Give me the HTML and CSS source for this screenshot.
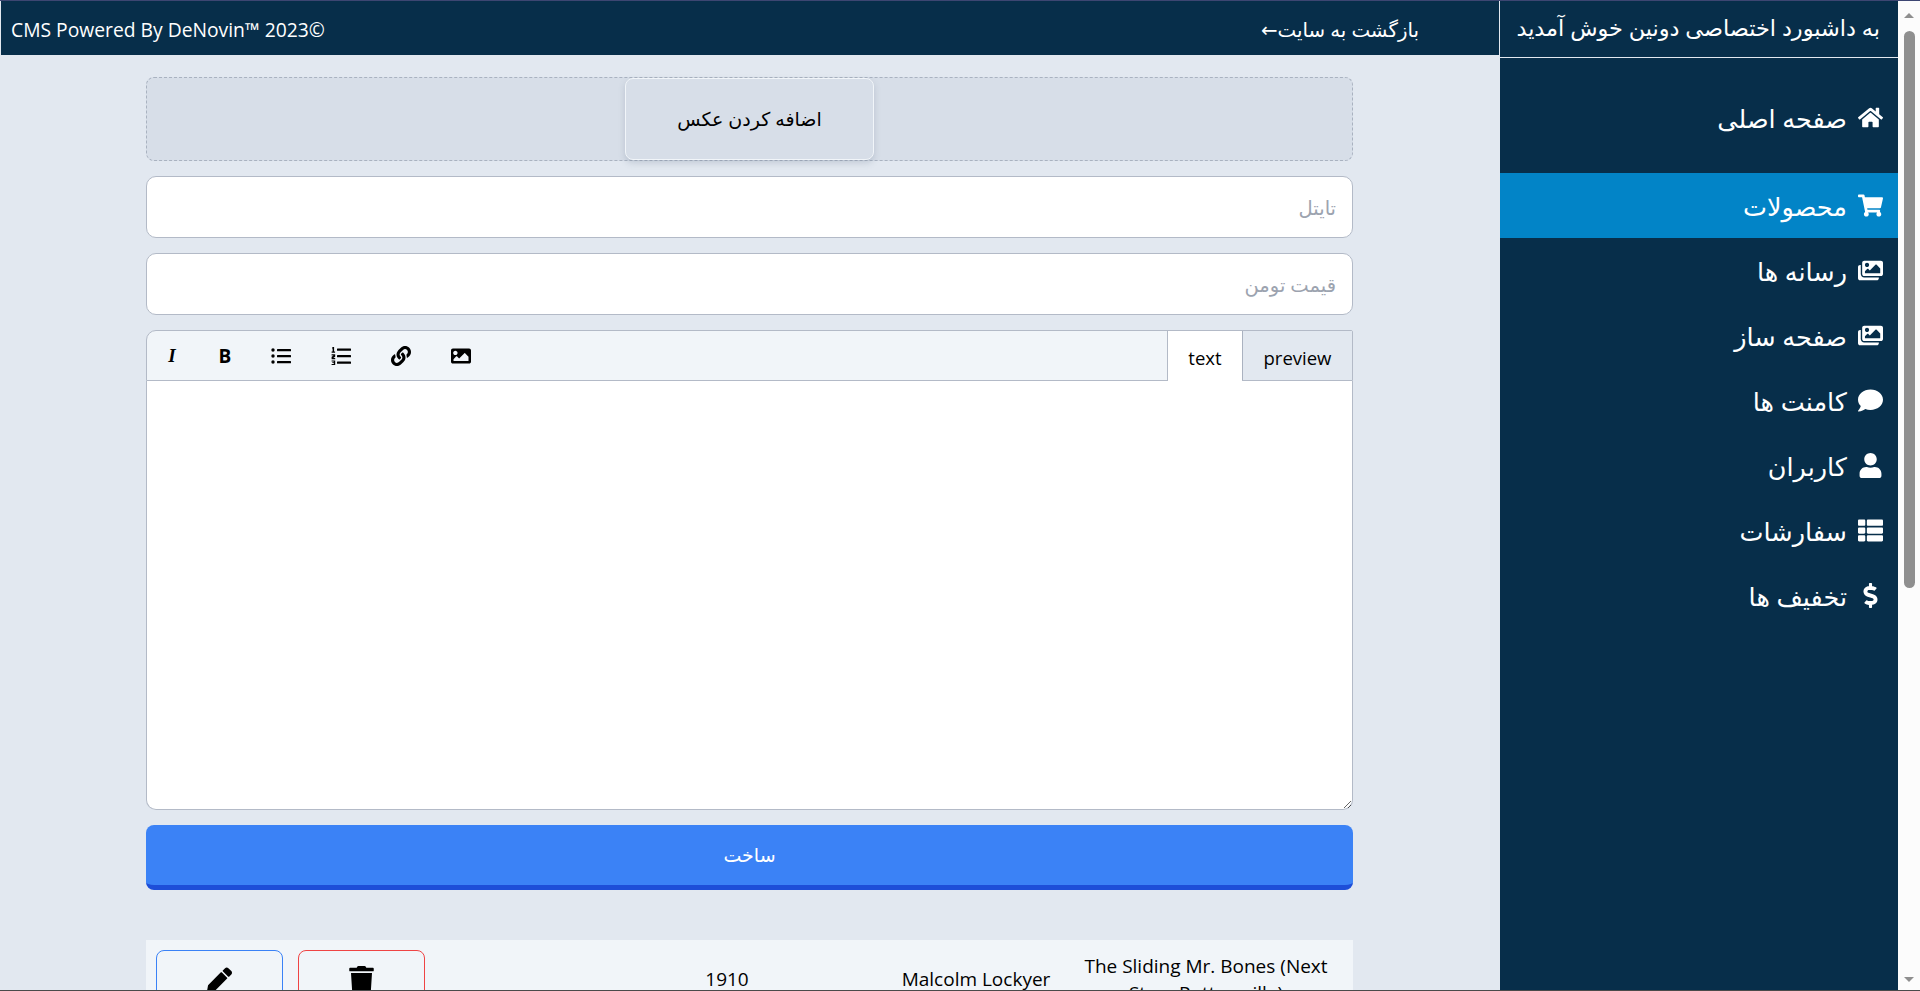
FILE: index.html
```html
<!DOCTYPE html>
<html lang="fa">
<head>
<meta charset="utf-8">
<title>CMS</title>
<link rel="stylesheet" href="styles.css">
</head>
<body>
<div class="edge-top"></div>
<div class="app">
  <main class="main">
    <header class="topbar">
      <span class="copyright">CMS Powered By DeNovin™ 2023©</span>
      <a class="back" dir="rtl">بازگشت به سایت←</a>
    </header>
    <div class="content">
      <div class="dropzone"><button class="add-photo" dir="rtl">اضافه کردن عکس</button></div>
      <input class="field" dir="rtl" type="text" placeholder="تایتل">
      <input class="field" dir="rtl" type="text" placeholder="قیمت تومن">
      <div class="editor">
        <div class="editor-bar">
          <div class="tools">
            <span class="tool tool-i">I</span>
            <span class="tool tool-b">B</span>
            <span class="tool tool-ul"><svg class="ticon" viewBox="0 0 20 20"><circle cx="2" cy="4" r="1.7"/><circle cx="2" cy="10" r="1.7"/><circle cx="2" cy="16" r="1.7"/><rect x="6" y="3" width="14" height="2.2" rx=".5"/><rect x="6" y="9" width="14" height="2.2" rx=".5"/><rect x="6" y="15" width="14" height="2.2" rx=".5"/></svg></span>
            <span class="tool tool-ol"><svg class="ticon" viewBox="0 0 20 20"><rect x="6" y="2.5" width="14" height="2.2" rx=".5"/><rect x="6" y="9" width="14" height="2.2" rx=".5"/><rect x="6" y="15.5" width="14" height="2.2" rx=".5"/><path d="M1.5 1h1.6v4.6h1v1.2H.6V5.6h1V2.6h-.6zM.6 8.2h3.6v2.6L2.2 12h2v1.2H.6v-2.4l2-1.4H.6zM.6 14.4h3.6V19H.6v-1.1h2.2v-.8H1.3v-.9h1.5v-.7H.6z"/></svg></span>
            <span class="tool tool-link"><svg class="ticon" viewBox="0 0 512 512"><path d="M326.612 185.391c59.747 59.809 58.927 155.698.36 214.59-.11.12-.24.25-.36.37l-67.2 67.2c-59.27 59.27-155.699 59.262-214.96 0-59.27-59.26-59.27-155.7 0-214.96l37.106-37.106c9.84-9.84 26.786-3.3 27.294 10.606.648 17.722 3.826 35.527 9.69 52.721 1.986 5.822.567 12.262-3.783 16.612l-13.087 13.087c-28.026 28.026-28.905 73.66-1.155 101.96 28.024 28.579 74.086 28.749 102.325.51l67.2-67.19c28.191-28.191 28.073-73.757 0-101.83-3.701-3.694-7.429-6.564-10.341-8.569a16.037 16.037 0 0 1-6.947-12.606c-.396-10.567 3.348-21.456 11.698-29.806l21.054-21.055c5.521-5.521 14.182-6.199 20.584-1.731a152.482 152.482 0 0 1 20.522 17.197zM467.547 44.449c-59.261-59.262-155.69-59.27-214.96 0l-67.2 67.2c-.12.12-.25.25-.36.37-58.566 58.892-59.387 154.781.36 214.59a152.454 152.454 0 0 0 20.521 17.196c6.402 4.468 15.064 3.789 20.584-1.731l21.054-21.055c8.35-8.35 12.094-19.239 11.698-29.806a16.037 16.037 0 0 0-6.947-12.606c-2.912-2.005-6.64-4.875-10.341-8.569-28.073-28.073-28.191-73.639 0-101.83l67.2-67.19c28.239-28.239 74.3-28.069 102.325.51 27.75 28.3 26.872 73.934-1.155 101.96l-13.087 13.087c-4.35 4.35-5.769 10.79-3.783 16.612 5.864 17.194 9.042 34.999 9.69 52.721.509 13.906 17.454 20.446 27.294 10.606l37.106-37.106c59.271-59.259 59.271-155.699.001-214.959z"/></svg></span>
            <span class="tool tool-img"><svg class="ticon" viewBox="0 0 512 512"><path d="M464 448H48c-26.51 0-48-21.49-48-48V112c0-26.51 21.49-48 48-48h416c26.51 0 48 21.49 48 48v288c0 26.51-21.49 48-48 48zM112 120c-30.928 0-56 25.072-56 56s25.072 56 56 56 56-25.072 56-56-25.072-56-56-56zM64 384h384V272l-87.515-87.515c-4.686-4.686-12.284-4.686-16.971 0L208 320l-55.515-55.515c-4.686-4.686-12.284-4.686-16.971 0L64 336v48z"/></svg></span>
          </div>
          <div class="tabs">
            <span class="tab tab-on">text</span>
            <span class="tab tab-off">preview</span>
          </div>
        </div>
        <textarea class="editor-text"></textarea>
      </div>
      <button class="submit" dir="rtl">ساخت</button>
      <div class="row">
        <div class="actions">
          <button class="act act-edit"><svg class="act-icon" viewBox="0 0 512 512"><path d="M497.9 142.1l-46.1 46.1c-4.7 4.7-12.3 4.7-17 0l-111-111c-4.7-4.7-4.7-12.3 0-17l46.1-46.1c18.7-18.7 49.1-18.7 67.9 0l60.1 60.1c18.8 18.7 18.8 49.1 0 67.9zM284.2 99.8L21.6 362.4.4 483.9c-2.9 16.4 11.4 30.6 27.8 27.8l121.5-21.3 262.6-262.6c4.7-4.7 4.7-12.3 0-17l-111-111c-4.8-4.7-12.4-4.7-17.1 0z"/></svg></button>
          <button class="act act-del"><svg class="act-icon" viewBox="0 0 448 512"><path d="M432 32H312l-9.4-18.7A24 24 0 0 0 281.1 0H166.8a23.72 23.72 0 0 0-21.4 13.3L136 32H16A16 16 0 0 0 0 48v32a16 16 0 0 0 16 16h416a16 16 0 0 0 16-16V48a16 16 0 0 0-16-16zM53.2 467a48 48 0 0 0 47.9 45h245.8a48 48 0 0 0 47.9-45L416 128H32z"/></svg></button>
        </div>
        <span></span>
        <span class="cell">1910</span>
        <span class="cell">Malcolm Lockyer</span>
        <span class="cell">The Sliding Mr. Bones (Next Stop, Pottersville)</span>
      </div>
    </div>
  </main>
  <aside class="sidebar" dir="rtl">
    <div class="side-head">به داشبورد اختصاصی دونین خوش آمدید</div>
    <nav class="nav">
      <a class="nav-item nav-home"><svg class="nav-icon" viewBox="0 0 576 512"><path d="M280.37 148.26L96 300.11V464a16 16 0 0 0 16 16l112.06-.29a16 16 0 0 0 15.92-16V368a16 16 0 0 1 16-16h64a16 16 0 0 1 16 16v95.64a16 16 0 0 0 16 16.05L464 480a16 16 0 0 0 16-16V300L295.67 148.26a12.19 12.19 0 0 0-15.3 0zM571.6 251.47L488 182.56V44.05a12 12 0 0 0-12-12h-56a12 12 0 0 0-12 12v72.61L318.47 43a48 48 0 0 0-61 0L4.34 251.47a12 12 0 0 0-1.6 16.9l25.5 31A12 12 0 0 0 45.15 301l235.22-193.74a12.19 12.19 0 0 1 15.3 0L530.9 301a12 12 0 0 0 16.9-1.6l25.5-31a12 12 0 0 0-1.7-16.93z"/></svg><span>صفحه اصلی</span></a>
      <a class="nav-item nav-active"><svg class="nav-icon" viewBox="0 0 576 512"><path d="M528.12 301.319l47.273-208C578.806 78.301 567.391 64 551.99 64H159.208l-9.166-44.81C147.758 8.021 137.93 0 126.529 0H24C10.745 0 0 10.745 0 24v16c0 13.255 10.745 24 24 24h69.883l70.248 343.435C147.325 417.1 136 435.222 136 456c0 30.928 25.072 56 56 56s56-25.072 56-56c0-15.674-6.447-29.835-16.824-40h209.647C430.447 426.165 424 440.326 424 456c0 30.928 25.072 56 56 56s56-25.072 56-56c0-22.172-12.888-41.332-31.579-50.405l5.517-24.276c3.413-15.018-8.002-29.319-23.403-29.319H218.117l-6.545-32h293.145c11.206 0 20.92-7.754 23.403-18.681z"/></svg><span>محصولات</span></a>
      <a class="nav-item"><svg class="nav-icon" viewBox="0 0 576 512"><path d="M480 416v16c0 26.51-21.49 48-48 48H48c-26.51 0-48-21.49-48-48V176c0-26.51 21.49-48 48-48h16v208c0 44.112 35.888 80 80 80h336zm96-80V80c0-26.51-21.49-48-48-48H144c-26.51 0-48 21.49-48 48v256c0 26.51 21.49 48 48 48h384c26.51 0 48-21.49 48-48zM256 128c0 26.51-21.49 48-48 48s-48-21.49-48-48 21.49-48 48-48 48 21.49 48 48zm-96 144l55.515-55.515c4.686-4.686 12.284-4.686 16.971 0L272 256l135.515-135.515c4.686-4.686 12.284-4.686 16.971 0L512 208v112H160v-48z"/></svg><span>رسانه ها</span></a>
      <a class="nav-item"><svg class="nav-icon" viewBox="0 0 576 512"><path d="M480 416v16c0 26.51-21.49 48-48 48H48c-26.51 0-48-21.49-48-48V176c0-26.51 21.49-48 48-48h16v208c0 44.112 35.888 80 80 80h336zm96-80V80c0-26.51-21.49-48-48-48H144c-26.51 0-48 21.49-48 48v256c0 26.51 21.49 48 48 48h384c26.51 0 48-21.49 48-48zM256 128c0 26.51-21.49 48-48 48s-48-21.49-48-48 21.49-48 48-48 48 21.49 48 48zm-96 144l55.515-55.515c4.686-4.686 12.284-4.686 16.971 0L272 256l135.515-135.515c4.686-4.686 12.284-4.686 16.971 0L512 208v112H160v-48z"/></svg><span>صفحه ساز</span></a>
      <a class="nav-item"><svg class="nav-icon" viewBox="0 0 512 512"><path d="M256 32C114.6 32 0 125.1 0 240c0 49.6 21.4 95 57 130.7C44.5 421.1 2.7 466 2.2 466.5c-2.2 2.3-2.8 5.7-1.5 8.7S4.8 480 8 480c66.3 0 116-31.8 140.6-51.4 32.7 12.3 69 19.4 107.4 19.4 141.4 0 256-93.1 256-208S397.4 32 256 32z"/></svg><span>کامنت ها</span></a>
      <a class="nav-item"><svg class="nav-icon" viewBox="0 0 448 512"><path d="M224 256c70.7 0 128-57.3 128-128S294.7 0 224 0 96 57.3 96 128s57.3 128 128 128zm89.6 32h-16.7c-22.2 10.2-46.9 16-72.9 16s-50.6-5.8-72.9-16h-16.7C60.2 288 0 348.2 0 422.4V464c0 26.5 21.5 48 48 48h352c26.5 0 48-21.5 48-48v-41.6c0-74.2-60.2-134.4-134.4-134.4z"/></svg><span>کاربران</span></a>
      <a class="nav-item"><svg class="nav-icon" viewBox="0 0 512 512"><path d="M149.333 216v80c0 13.255-10.745 24-24 24H24c-13.255 0-24-10.745-24-24v-80c0-13.255 10.745-24 24-24h101.333c13.255 0 24 10.745 24 24zM0 376v80c0 13.255 10.745 24 24 24h101.333c13.255 0 24-10.745 24-24v-80c0-13.255-10.745-24-24-24H24c-13.255 0-24 10.745-24 24zM125.333 32H24C10.745 32 0 42.745 0 56v80c0 13.255 10.745 24 24 24h101.333c13.255 0 24-10.745 24-24V56c0-13.255-10.745-24-24-24zm80 448H488c13.255 0 24-10.745 24-24v-80c0-13.255-10.745-24-24-24H205.333c-13.255 0-24 10.745-24 24v80c0 13.255 10.745 24 24 24zm-24-424v80c0 13.255 10.745 24 24 24H488c13.255 0 24-10.745 24-24V56c0-13.255-10.745-24-24-24H205.333c-13.255 0-24 10.745-24 24zm24 264H488c13.255 0 24-10.745 24-24v-80c0-13.255-10.745-24-24-24H205.333c-13.255 0-24 10.745-24 24v80c0 13.255 10.745 24 24 24z"/></svg><span>سفارشات</span></a>
      <a class="nav-item"><svg class="nav-icon" viewBox="0 0 288 512"><path d="M209.2 233.4l-108-31.6C88.7 198.2 80 186.5 80 173.5c0-16.3 13.2-29.5 29.5-29.5h66.3c12.2 0 24.2 3.7 34.2 10.5 6.1 4.1 14.3 3.1 19.5-2l34.8-34c7.1-6.9 6.1-18.4-1.8-24.5C238 74.8 207.4 64.1 176 64V16c0-8.8-7.2-16-16-16h-32c-8.8 0-16 7.2-16 16v48h-2.5C45.8 64-5.4 118.7.5 183.6c4.2 46.1 39.4 83.6 83.8 96.6l102.5 30c12.5 3.7 21.2 15.3 21.2 28.3 0 16.3-13.2 29.5-29.5 29.5h-66.3C100 368 88 364.3 78 357.5c-6.1-4.1-14.3-3.1-19.5 2l-34.8 34c-7.1 6.9-6.1 18.4 1.8 24.5 24.5 19.2 55.1 29.9 86.5 30v48c0 8.8 7.2 16 16 16h32c8.8 0 16-7.2 16-16v-48.2c46.6-.9 90.3-28.6 105.7-72.7 21.5-61.6-14.6-124.8-72.5-141.7z"/></svg><span>تخفیف ها</span></a>
    </nav>
  </aside>
  <div class="scrollbar">
    <i class="sb-up"></i>
    <div class="sb-thumb"></div>
    <i class="sb-down"></i>
  </div>
</div>
<div class="edge-bottom"></div>
</body>
</html>
```
FILE: styles.css
```css
* { box-sizing: border-box; }
html, body { margin: 0; height: 100%; overflow: hidden; }
body {
  display: flex;
  flex-direction: column;
  height: 991px;
  background: #e2e8f0;
  font-family: "Open Sans", "DejaVu Sans", sans-serif;
  font-size: 19px;
  color: #000;
}
.edge-top { height: 1px; background: #3d4672; flex: none; }
.edge-bottom { height: 1px; background: #4a4a4a; flex: none; }
.app { flex: 1; display: flex; min-height: 0; }

.main { width: 1500px; flex: none; overflow: hidden; padding-left: 1px; }
.topbar {
  width: 1498px;
  height: 54px;
  background: #072e4a;
  color: #fff;
  display: flex;
  align-items: center;
  justify-content: space-between;
  padding: 2px 80px 0 10px;
}
.copyright { font-size: 19.3px; }
.back { font-size: 19.8px; }
.content {
  width: 1207px;
  margin-left: 145px;
  padding-top: 22px;
  display: flex;
  flex-direction: column;
}
.dropzone {
  height: 84px;
  background: #d7dee8;
  border: 1px dashed #a9b2c0;
  border-radius: 8px;
  display: flex;
  justify-content: center;
  margin-bottom: 15px;
}
.add-photo {
  width: 249px;
  height: 82px;
  background: #d7dee8;
  border: 1px solid #f1f5f9;
  border-radius: 8px;
  box-shadow: 0 3px 6px rgba(100, 116, 139, .25);
  font: inherit;
  color: #000;
}
.field {
  height: 62px;
  background: #fff;
  border: 1.5px solid #b3bac7;
  border-radius: 10px;
  padding: 0 16px;
  margin-bottom: 15px;
  font: inherit;
  font-size: 19.5px;
  outline: none;
}
.field::placeholder { color: #9ca3af; opacity: 1; }

.editor {
  height: 480px;
  display: flex;
  flex-direction: column;
  margin-bottom: 15px;
}
.editor-bar {
  height: 51px;
  flex: none;
  display: flex;
  justify-content: space-between;
  background: #f1f5f9;
  border: 1px solid #b3bac7;
  border-radius: 10px 2px 0 0;
}
.tools { display: flex; align-items: center; padding-left: 15px; }
.tool { display: flex; justify-content: center; align-items: center; width: 20px; height: 24px; color: #000; }
.tool-i { font: italic 700 19px "Liberation Serif", serif; }
.tool-b { font: 700 19px "Open Sans", sans-serif; margin-left: 33px; }
.tool-ul { margin-left: 36px; }
.tool-ol { margin-left: 40px; }
.tool-link { margin-left: 40px; }
.tool-img { margin-left: 40px; }
.ticon { width: 20px; height: 20px; display: block; fill: #000; }
.tabs { display: flex; align-self: stretch; }
.tab { display: flex; align-items: center; justify-content: center; font-size: 18.5px; padding-top: 3px; }
.tab-on { width: 75px; background: #fff; border-left: 1px solid #b3bac7; margin-bottom: -1px; }
.tab-off { width: 110px; background: #e2e8f0; border-left: 1.5px solid #aab2c0; }
.editor-text {
  flex: 1;
  display: block;
  width: 100%;
  background: #fff;
  border: 1px solid #b3bac7;
  border-top: 0;
  border-radius: 0 0 10px 10px;
  outline: none;
  padding: 10px;
  resize: vertical;
}
.submit {
  height: 65px;
  flex: none;
  width: 100%;
  background: #3b82f6;
  border: 0;
  border-bottom: 5px solid #1d4ed8;
  border-radius: 8px;
  color: #fff;
  font: inherit;
  margin-bottom: 50px;
}
.row {
  flex: none;
  display: grid;
  grid-template-columns: 269px 1fr 298px 200px 260px;
  align-items: center;
  background: #f1f5f9;
  padding: 10px 17px 10px 10px;
}
.actions { display: flex; gap: 15px; }
.act {
  width: 127px;
  height: 62px;
  background: transparent;
  border-radius: 8px;
  border: 1px solid;
  display: flex;
  align-items: center;
  justify-content: center;
  padding: 0 0 3px;
}
.act-edit { border-color: #3b82f6; }
.act-del { border-color: #ef4444; }
.act-icon { width: 25px; height: 28px; fill: #000; display: block; }
.cell { text-align: center; line-height: 27px; margin-top: -3px; }

.sidebar {
  width: 398px;
  flex: none;
  background: #072e4a;
  color: #fff;
}
.side-head {
  height: 57px;
  border-bottom: 1px solid #e2e8f0;
  display: flex;
  align-items: center;
  padding: 0 18px 3px 0;
  font-size: 22.4px;
  white-space: nowrap;
}
.nav { padding-top: 27px; display: flex; flex-direction: column; }
.nav-item {
  height: 65px;
  display: flex;
  align-items: center;
  gap: 11px;
  padding-right: 15px;
  font-size: 25.5px;
  color: #fff;
}
.nav-home { margin-bottom: 23px; }
.nav-active { background: #0284c7; }
.nav-icon { width: 25px; height: 25px; fill: #fff; flex: none; display: block; }

.scrollbar {
  width: 22px;
  flex: none;
  background: #fcfcfc;
  position: relative;
}
.sb-up, .sb-down {
  position: absolute;
  left: 6px;
  width: 0;
  height: 0;
  border-left: 5px solid transparent;
  border-right: 5px solid transparent;
}
.sb-up { top: 12px; border-bottom: 5px solid #8f8f8f; }
.sb-down { bottom: 8px; border-top: 5px solid #8f8f8f; }
.sb-thumb {
  position: absolute;
  top: 30px;
  left: 6px;
  width: 11px;
  height: 557px;
  background: #8f8f8f;
  border-radius: 6px;
}
```
